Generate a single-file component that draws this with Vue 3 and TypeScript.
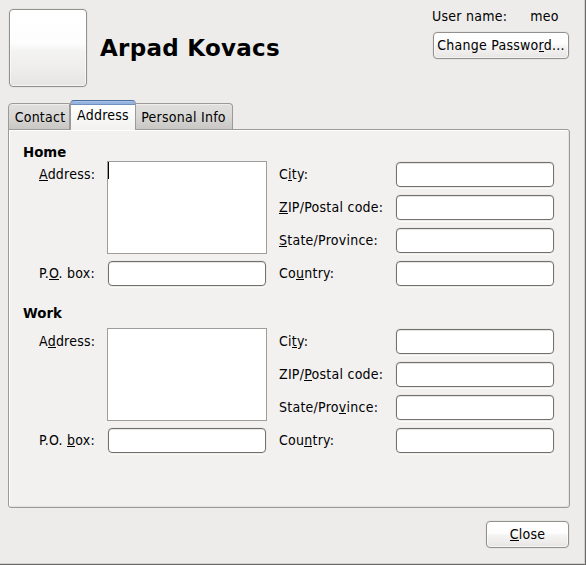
<script setup lang="ts">
import { ref } from 'vue'

interface Label {
  before: string
  key: string
  after: string
}

interface Section {
  title: string
  address: Label
  poBox: Label
  fields: Label[]
}

// An underscore marks the mnemonic letter, as in GTK label strings.
function mnemonic(text: string): Label {
  const i = text.indexOf('_')
  return { before: text.slice(0, i), key: text.charAt(i + 1), after: text.slice(i + 2) }
}

const tabs = ['Contact', 'Address', 'Personal Info']
const activeTab = ref('Address')

const sections: Section[] = [
  {
    title: 'Home',
    address: mnemonic('_Address:'),
    poBox: mnemonic('P._O. box:'),
    fields: ['C_ity:', '_ZIP/Postal code:', '_State/Province:', 'Co_untry:'].map(mnemonic),
  },
  {
    title: 'Work',
    address: mnemonic('A_ddress:'),
    poBox: mnemonic('P.O. _box:'),
    fields: ['Ci_ty:', 'ZIP/_Postal code:', 'State/Pro_vince:', 'Cou_ntry:'].map(mnemonic),
  },
]
</script>

<template>
  <main class="window">
    <header class="header">
      <button class="gtk-button avatar" aria-label="Picture"></button>
      <h1 class="name">Arpad Kovacs</h1>
      <div class="account">
        <div class="user"><span>User name:</span><span>meo</span></div>
        <button class="gtk-button change">Change Passwo<u>r</u>d...</button>
      </div>
    </header>

    <nav class="tabs">
      <button
        v-for="tab in tabs"
        :key="tab"
        class="tab"
        :class="[tab.split(' ')[0].toLowerCase(), { active: tab === activeTab }]"
        @click="activeTab = tab"
      >{{ tab }}</button>
    </nav>

    <div class="panel">
      <section v-for="(s, n) in sections" :key="s.title" class="section">
        <h2>{{ s.title }}</h2>
        <div class="columns">
          <div class="left">
            <label>{{ s.address.before }}<u>{{ s.address.key }}</u>{{ s.address.after }}</label>
            <div class="textview"><i v-if="n === 0" class="caret"></i></div>
            <label>{{ s.poBox.before }}<u>{{ s.poBox.key }}</u>{{ s.poBox.after }}</label>
            <input class="entry" type="text" />
          </div>
          <div class="right">
            <template v-for="(f, i) in s.fields" :key="i">
              <label>{{ f.before }}<u>{{ f.key }}</u>{{ f.after }}</label>
              <input class="entry" type="text" />
            </template>
          </div>
        </div>
      </section>
    </div>

    <footer class="footer">
      <button class="gtk-button close"><u>C</u>lose</button>
    </footer>
  </main>
</template>

<style>
body {
  margin: 0;
  overflow: hidden;
}
</style>

<style scoped>
* {
  box-sizing: border-box;
}
.window {
  width: 586px;
  height: 565px;
  padding: 0 16px 0 8px;
  background: #edeceb;
  border: solid #6b6967;
  border-width: 0 1px 1px 0;
  box-shadow: inset -1px -1px #d2d0ce;
  font: 14px/16px "DejaVu Sans Condensed", "DejaVu Sans", sans-serif;
  letter-spacing: 0.25px;
  color: #000;
}
button,
input {
  margin: 0;
  font: inherit;
  letter-spacing: inherit;
  color: inherit;
  outline: none;
}
u {
  text-decoration: none;
  background: linear-gradient(#000, #000) 0 14px / 100% 1px no-repeat;
}
.header {
  display: flex;
  height: 100px;
}
.gtk-button {
  padding: 0 0 2px;
  border: 1px solid #92908d;
  border-radius: 4px;
  background: linear-gradient(#fff, #fdfdfd 44%, #f3f3f2 54%, #eeedec 78%, #e6e5e3);
  box-shadow: 0 0 0 1px #e6e5e3, inset 0 0 0 1px rgba(255, 255, 255, 0.6);
  white-space: nowrap;
}
.avatar {
  width: 78px;
  height: 78px;
  margin: 9px 13px 0 1px;
}
.name {
  flex: 1;
  margin: 34px 0 0;
  font-family: "DejaVu Sans", sans-serif;
  font-size: 23px;
  letter-spacing: 0.27px;
  line-height: 28px;
  font-weight: bold;
  white-space: nowrap;
}
.account {
  width: 137px;
  padding-top: 8px;
}
.user {
  display: flex;
  gap: 23px;
  height: 24px;
}
.change {
  display: block;
  width: 136px;
  height: 27px;
  margin-left: 1px;
}
.tabs {
  display: flex;
  align-items: flex-end;
  height: 30px;
  margin-bottom: -1px;
}
.tab {
  height: 27px;
  padding: 0;
  border: 1px solid #9c9a97;
  border-left-width: 0;
  background: linear-gradient(#e0dfdd, #d8d7d5 50%, #c9c7c4);
  box-shadow: inset 0 1px #eeedec;
  white-space: nowrap;
}
.contact {
  width: 62px;
  padding-left: 2px;
  border-left-width: 1px;
  border-radius: 4px 0 0 0;
}
.address {
  width: 66px;
}
.personal {
  width: 97px;
  padding-right: 1px;
  border-radius: 0 4px 0 0;
}
.tab.active {
  height: 30px;
  padding: 0 0 2px;
  border-left-width: 1px;
  border-top-color: #4b6f9f;
  border-bottom: 0;
  border-radius: 4px 4px 0 0;
  background: linear-gradient(#a8c3e8 0 1px, #94b3df 1px 3px, #6f90c0 3px 4px, #fff 4px, #f2f1f0);
  box-shadow: none;
  position: relative;
}
.panel {
  width: 562px;
  height: 379px;
  padding: 14px 0 0 14px;
  border: 1px solid #9c9a97;
  border-radius: 0 3px 3px 3px;
  background: #f2f1f0;
  box-shadow: inset 1px 1px #fff, inset -1px -1px #e3e2e0;
}
.section {
  height: 161px;
}
.section + .section .columns {
  padding-top: 6px;
}
h2 {
  height: 17px;
  margin: 0;
  font-family: "DejaVu Sans", sans-serif;
  font-size: 13.33px;
  letter-spacing: 0;
  line-height: 17px;
}
.columns {
  display: flex;
  gap: 12px;
  padding-left: 16px;
}
label {
  padding-top: 5px;
  white-space: nowrap;
}
.left {
  display: grid;
  grid-template: 100px 25px / 68px 160px;
}
.textview {
  height: 93px;
  border: 1px solid #9f9d9b;
  background: #fff;
}
.caret {
  display: block;
  width: 1px;
  height: 17px;
  background: #000;
}
.right {
  display: grid;
  grid-template: repeat(4, 25px) / 117px 158px;
  row-gap: 8px;
  padding-top: 1px;
}
.right label,
.left .textview ~ label {
  padding-top: 4px;
}
.entry {
  width: 158px;
  height: 25px;
  padding: 0 4px;
  border: 1px solid #73716e;
  border-radius: 4px;
  background: #fff;
  box-shadow: 0 0 0 1px #eae9e7, 0 1px 0 1px #fafaf9, inset 0 1px #e4e4e3;
}
.left .entry {
  margin-left: 1px;
}
.footer {
  display: flex;
  justify-content: flex-end;
  padding: 13px 0 0;
}
.close {
  width: 83px;
  height: 27px;
}
</style>
